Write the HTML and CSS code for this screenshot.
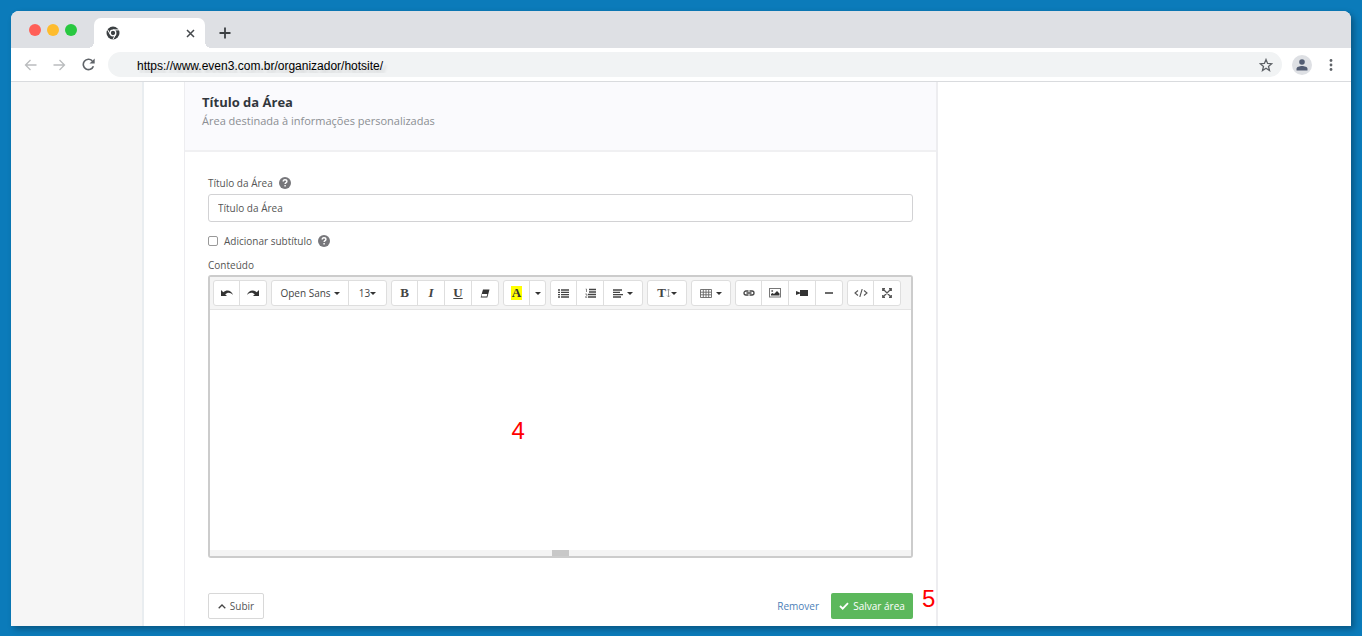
FILE: index.html
```html
<!DOCTYPE html>
<html lang="pt-BR">
<head>
<meta charset="UTF-8">
<meta name="viewport" content="width=device-width, initial-scale=1.0">
<title>Hotsite - Título da Área</title>
<link rel="stylesheet" href="styles.css">
</head>
<body>
<div class="window">
  <div class="tabs">
    <div class="lights">
      <span class="light red"></span>
      <span class="light yellow"></span>
      <span class="light green"></span>
    </div>
    <div class="tab">
      <svg width="14" height="14" viewBox="0 0 14 14"><circle cx="7" cy="7" r="6.500" fill="#3c4043"/><path d="M7 3.900h5.800M4.300 8.500L1.500 3.600M9.700 8.500L6.900 13.400" stroke="#fff" stroke-width="1"/><circle cx="7" cy="7" r="2.800" fill="#3c4043" stroke="#fff" stroke-width="1.300"/></svg>
      <button class="tab-close" aria-label="Fechar"><svg width="9" height="9" viewBox="0 0 9 9"><path d="M1 1l7 7M8 1l-7 7" stroke="#45494d" stroke-width="1.500"/></svg></button>
    </div>
    <button class="tab-new" aria-label="Nova guia"><svg width="12" height="12" viewBox="0 0 12 12"><path d="M6 .5v11M.5 6h11" stroke="#3c4043" stroke-width="1.800"/></svg></button>
  </div>

  <div class="nav">
    <button class="nav-btn" aria-label="Voltar"><svg width="13" height="12" viewBox="0 0 13 12"><path d="M12.500 6H1.500M6.500 1L1.500 6l5 5" fill="none" stroke="#babcbe" stroke-width="1.300"/></svg></button>
    <button class="nav-btn" aria-label="Avançar"><svg width="13" height="12" viewBox="0 0 13 12"><path d="M.5 6h11M6.500 1l5 5-5 5" fill="none" stroke="#babcbe" stroke-width="1.300"/></svg></button>
    <button class="nav-btn" aria-label="Recarregar"><svg width="13" height="13" viewBox="0 0 13 13"><path d="M11.400 8.200A5.200 5.200 0 1 1 10.300 2.900" fill="none" stroke="#5f6368" stroke-width="1.600"/><path d="M12.700.400v5.200H7.500z" fill="#5f6368"/></svg></button>
    <div class="address">
      <input class="url" type="text" value="https://www.even3.com.br/organizador/hotsite/" aria-label="Endereço">
      <button class="star" aria-label="Favoritar"><svg width="14" height="14" viewBox="0 0 14 14"><path d="M7 1.500l1.600 3.900 4.100.3-3.200 2.700 1 4.100L7 10.300l-3.500 2.200 1-4.100L1.300 5.700l4.100-.3z" fill="none" stroke="#5f6368" stroke-width="1.300"/></svg></button>
    </div>
    <button class="avatar" aria-label="Perfil"><svg width="12" height="12" viewBox="0 0 12 12"><circle cx="6" cy="3" r="2.800" fill="#535d73"/><path d="M.5 11.500V9.800C.5 8 3.500 7 6 7s5.500 1 5.500 2.800v1.700z" fill="#535d73"/></svg></button>
    <button class="menu" aria-label="Menu"><svg width="4" height="14" viewBox="0 0 4 14"><g fill="#5f6368"><circle cx="2" cy="2.500" r="1.400"/><circle cx="2" cy="7" r="1.400"/><circle cx="2" cy="11.500" r="1.400"/></g></svg></button>
  </div>

  <div class="page">
    <aside class="sidebar"></aside>
    <section class="panel">
      <header class="panel-header">
        <h1 class="panel-title">Título da Área</h1>
        <p class="panel-sub">Área destinada à informações personalizadas</p>
      </header>

      <form class="panel-body">
        <div class="label-row">
          <label for="titulo">Título da Área</label>
          <svg class="help" width="12" height="12" viewBox="0 0 12 12"><circle cx="6" cy="6" r="6" fill="#77777b"/><path d="M4.200 4.600C4.200 3.200 5 2.800 6 2.800s1.900.6 1.900 1.600C7.900 5.700 6.100 5.600 6.100 7.100M6.100 8.100v1.400" fill="none" stroke="#fff" stroke-width="1.400"/></svg>
        </div>
        <input class="text" id="titulo" type="text" value="Título da Área">

        <div class="check-row">
          <input class="check" id="subtitulo" type="checkbox">
          <label for="subtitulo">Adicionar subtítulo</label>
          <svg class="help" width="12" height="12" viewBox="0 0 12 12"><circle cx="6" cy="6" r="6" fill="#77777b"/><path d="M4.200 4.600C4.200 3.200 5 2.800 6 2.800s1.900.6 1.900 1.600C7.900 5.700 6.100 5.600 6.100 7.100M6.100 8.100v1.400" fill="none" stroke="#fff" stroke-width="1.400"/></svg>
        </div>

        <label class="content-label" for="conteudo">Conteúdo</label>
        <div class="editor">
          <div class="toolbar">
            <div class="group">
              <button type="button" class="btn" aria-label="Desfazer"><svg width="12" height="8" viewBox="0 0 12 8"><path d="M0 1v6h6L4.200 5.200C6.500 3 9.500 3 12 6 10.500 1.500 6 .2 2.300 3.200z" fill="#333"/></svg></button>
              <button type="button" class="btn" aria-label="Refazer"><svg width="12" height="8" viewBox="0 0 12 8"><path d="M12 1v6H6l1.800-1.800C5.500 3 2.500 3 0 6 1.500 1.500 6 .2 9.700 3.200z" fill="#333"/></svg></button>
            </div>
            <div class="group">
              <button type="button" class="btn font-name">Open Sans <span class="caret"></span></button>
              <button type="button" class="btn font-size">13<span class="caret"></span></button>
            </div>
            <div class="group">
              <button type="button" class="btn serif bold">B</button>
              <button type="button" class="btn serif italic">I</button>
              <button type="button" class="btn serif underline">U</button>
              <button type="button" class="btn" aria-label="Limpar"><svg width="10" height="9" viewBox="0 0 10 9"><path d="M3 .5h6.500L7.300 8.500H.7z" fill="#333"/><path d="M2 5h5.300l-.6 2.400H1.500z" fill="#fff"/></svg></button>
            </div>
            <div class="group">
              <button type="button" class="btn serif"><span class="mark">A</span></button>
              <button type="button" class="btn narrow" aria-label="Mais cores"><span class="caret"></span></button>
            </div>
            <div class="group">
              <button type="button" class="btn" aria-label="Lista"><svg width="11" height="9" viewBox="0 0 11 9"><path d="M0 1h2M0 3.300h2M0 5.700h2M0 8h2M3 1h8M3 3.300h8M3 5.700h8M3 8h8" stroke="#444" stroke-width="1.300"/></svg></button>
              <button type="button" class="btn" aria-label="Lista numerada"><svg width="11" height="10" viewBox="0 0 11 10"><path d="M4 1.500h7M4 4h7M3 6.500h8M3 9h8" stroke="#444" stroke-width="1.300"/><path d="M.7 1h.8v3M.3 6h1.500v1.500L.3 9.300h1.900" fill="none" stroke="#666" stroke-width=".8"/></svg></button>
              <button type="button" class="btn wide" aria-label="Alinhamento"><svg width="10" height="9" viewBox="0 0 10 9"><path d="M0 1h9M0 3.300h7M0 5.700h10M0 8h8" stroke="#444" stroke-width="1.300"/></svg><span class="caret spaced"></span></button>
            </div>
            <div class="group">
              <button type="button" class="btn serif single line-height" aria-label="Altura da linha">T<svg width="5" height="10" viewBox="0 0 5 10"><path d="M2.500 1v8M1 2.500L2.500 1 4 2.500M1 7.500L2.500 9 4 7.500" fill="none" stroke="#888" stroke-width=".8"/></svg><span class="caret"></span></button>
            </div>
            <div class="group">
              <button type="button" class="btn single" aria-label="Tabela"><svg width="12" height="9" viewBox="0 0 12 9"><path d="M.5.500h11v8H.5zM.5 3.200h11M.5 5.800h11M3.300.500v8M6 .500v8M8.700.500v8" fill="none" stroke="#666" stroke-width=".9"/></svg><span class="caret spaced"></span></button>
            </div>
            <div class="group">
              <button type="button" class="btn" aria-label="Link"><svg width="12" height="6" viewBox="0 0 12 6"><path d="M5.500 1H3a2 2 0 0 0 0 4h2.500M6.500 1H9a2 2 0 0 1 0 4H6.500M3.500 3h5" fill="none" stroke="#444" stroke-width="1.300"/></svg></button>
              <button type="button" class="btn" aria-label="Imagem"><svg width="12" height="10" viewBox="0 0 12 10"><rect x=".5" y=".5" width="11" height="8.500" fill="#fff" stroke="#777"/><circle cx="3.200" cy="3" r="1" fill="#666"/><path d="M2 7.500V6l1.500-1L5 6l3-3 2.500 2.500v2z" fill="#333"/></svg></button>
              <button type="button" class="btn" aria-label="Vídeo"><svg width="12" height="8" viewBox="0 0 12 8"><path d="M4 1h8v6H4zM0 2l4 1.500v1L0 6z" fill="#333"/></svg></button>
              <button type="button" class="btn" aria-label="Linha"><svg width="8" height="2" viewBox="0 0 8 2"><path d="M0 1h8" stroke="#444" stroke-width="1.600"/></svg></button>
            </div>
            <div class="group">
              <button type="button" class="btn" aria-label="Código"><svg width="14" height="8" viewBox="0 0 14 8"><path d="M4 1.500L1 4l3 2.500M10 1.500L13 4l-3 2.500M8.200 0L5.800 8" fill="none" stroke="#555" stroke-width="1.100"/></svg></button>
              <button type="button" class="btn" aria-label="Tela cheia"><svg width="10" height="10" viewBox="0 0 10 10"><path d="M1 1l8 8M9 1L1 9M.7 3V.7H3M7 .7h2.300V3M.7 7v2.300H3M7 9.300h2.300V7" fill="none" stroke="#555" stroke-width="1.200"/></svg></button>
            </div>
          </div>
          <textarea class="content" id="conteudo"></textarea>
          <div class="statusbar"><span class="grip"></span></div>
          <span class="step step-content">4</span>
        </div>

        <div class="actions">
          <button type="button" class="up"><svg width="8" height="5" viewBox="0 0 8 5"><path d="M.7 4.300L4 1l3.300 3.300" fill="none" stroke="#444" stroke-width="1.300"/></svg>Subir</button>
          <a class="remove" href="#">Remover</a>
          <button type="submit" class="save"><svg width="10" height="8" viewBox="0 0 10 8"><path d="M1 4l2.700 2.700L9 1.200" fill="none" stroke="#fff" stroke-width="1.800"/></svg>Salvar área</button>
          <span class="step step-save">5</span>
        </div>
      </form>
    </section>
  </div>
</div>
</body>
</html>
```

FILE: styles.css
```css
* {
  box-sizing: border-box;
}

body {
  margin: 0;
  padding: 11px 11px 10px;
  min-height: 100vh;
  display: flex;
  background: #0b7bba;
  font-family: "Open Sans", sans-serif;
  font-size: 10px;
  color: #555;
}

button, input, textarea {
  font: inherit;
  color: inherit;
}

button {
  padding: 0;
  border: 0;
  background: none;
  display: flex;
  align-items: center;
  justify-content: center;
}

svg {
  display: block;
  flex: none;
}

.window {
  flex: 1;
  display: flex;
  flex-direction: column;
  background: #fff;
  border-radius: 8px 8px 0 0;
  box-shadow: 3px 3px 6px rgba(0, 0, 0, 0.3);
}

/* browser tabs */
.tabs {
  display: flex;
  align-items: flex-end;
  height: 37px;
  padding-left: 18px;
  background: #dee0e4;
  border-radius: 8px 8px 0 0;
}

.lights {
  display: flex;
  gap: 6px;
  align-self: center;
  margin-right: 17px;
}

.light {
  width: 12px;
  height: 12px;
  border-radius: 50%;
}

.red { background: #ff5f57; }
.yellow { background: #febc2e; }
.green { background: #28c840; }

.tab {
  position: relative;
  display: flex;
  align-items: center;
  justify-content: space-between;
  width: 111px;
  height: 30px;
  padding: 0 10px 0 12px;
  background: #fff;
  border-radius: 7px 7px 0 0;
}

/* curved feet of the active tab */
.tab::before,
.tab::after {
  content: "";
  position: absolute;
  bottom: 0;
  width: 6px;
  height: 6px;
}

.tab::before {
  right: 100%;
  background: radial-gradient(circle at 0 0, #dee0e4 6px, #fff 6px);
}

.tab::after {
  left: 100%;
  background: radial-gradient(circle at 100% 0, #dee0e4 6px, #fff 6px);
}

.tab-new {
  height: 30px;
  margin-left: 14px;
}

/* address bar */
.nav {
  display: flex;
  align-items: center;
  height: 34px;
  padding: 0 18px 0 13px;
  border-bottom: 1px solid #d9dbde;
}

.nav-btn {
  margin-right: 16px;
}

.address {
  flex: 1;
  display: flex;
  align-items: center;
  height: 25px;
  margin-right: 10px;
  margin-left: -3px;
  padding: 0 9px 0 29px;
  background: #f1f3f4;
  border-radius: 13px;
}

.url {
  flex: 1;
  border: 0;
  padding: 2px 0 0;
  background: none;
  outline: 0;
  font-family: "Liberation Sans", Arial, sans-serif;
  font-size: 12px;
  color: #000;
  text-shadow: 3px 4px 3px rgba(0, 0, 0, 0.15);
}

.avatar {
  width: 20px;
  height: 20px;
  margin-right: 17px;
  background: #dee0e4;
  border-radius: 50%;
}

/* page */
.page {
  flex: 1;
  display: flex;
}

.sidebar {
  width: 133px;
  margin-right: 40px;
  background: #f6f6f6;
  border-right: 2px solid #e9edf0;
}

.panel {
  flex: 0 1 754px;
  border: solid #ededf0;
  border-width: 0 2px 0 1px;
}

.panel-header {
  height: 70px;
  padding: 11px 17px;
  background: #fafafd;
  border-bottom: 2px solid #f0f0f2;
}

.panel-title {
  margin: 0;
  font-size: 13px;
  line-height: 18px;
  color: #32373d;
}

.panel-sub {
  margin: 0;
  font-size: 11px;
  line-height: 19px;
  color: #8b8e93;
}

.panel-body {
  padding: 24px 23px 7px;
}

.label-row,
.check-row {
  display: flex;
  align-items: center;
  gap: 6px;
  line-height: 14px;
}

.text {
  display: block;
  width: 100%;
  height: 28px;
  margin: 4px 0 12px;
  padding: 0 9px;
  border: 1px solid #d2d2d4;
  border-radius: 3px;
}

.check {
  appearance: none;
  width: 10px;
  height: 10px;
  margin: 0;
  border: 1px solid #999;
  border-radius: 2px;
  background: #fff;
}

.content-label {
  display: block;
  margin: 10px 0 3px;
  line-height: 14px;
}

/* editor */
.editor {
  position: relative;
  border: 2px solid #ccc;
  border-radius: 3px;
}

.toolbar {
  display: flex;
  flex-wrap: wrap;
  gap: 4px;
  padding: 3px;
  background: #f4f4f4;
  border-bottom: 1px solid #e4e4e4;
}

.group {
  display: flex;
  border: 1px solid #dedede;
  border-radius: 3px;
  background: #fff;
}

.btn {
  width: 25px;
  height: 24px;
  color: #444;
}

.btn + .btn {
  width: 27px;
  border-left: 1px solid #dedede;
}

.btn.font-name { width: 76px; }
.btn.single { width: 38px; }
.btn + .btn.font-size { width: 38px; }
.btn + .btn.wide { width: 39px; }
.btn + .btn.narrow { width: 16px; }

.font-name .caret {
  margin-left: 3px;
}

.caret {
  border: solid transparent;
  border-width: 3px 3px 0;
  border-top-color: #333;
}

.caret.spaced {
  margin-left: 4px;
}

.serif {
  font-family: "Liberation Serif", serif;
  font-size: 13px;
  font-weight: bold;
}

.italic { font-style: italic; }
.underline { text-decoration: underline; }

.mark {
  padding: 0 1px;
  line-height: 14px;
  background: #ff0;
  color: #333;
}

.content {
  display: block;
  width: 100%;
  height: 240px;
  padding: 8px;
  border: 0;
  outline: 0;
  resize: none;
}

.statusbar {
  display: flex;
  justify-content: center;
  height: 6px;
  background: #f4f4f4;
}

.grip {
  width: 17px;
  height: 6px;
  background: #c8c8c8;
}

.actions {
  position: relative;
  display: flex;
  align-items: center;
  margin-top: 35px;
}

.up,
.save {
  height: 26px;
  border-radius: 2px;
  gap: 4px;
}

.up {
  width: 56px;
  margin-right: auto;
  border: 1px solid #d8d8d8;
}

.remove {
  margin-right: 12px;
  color: #4c80b8;
  text-decoration: none;
}

.save {
  width: 82px;
  background: #5cb85c;
  color: #fff;
}

/* numbered step marks */
.step {
  position: absolute;
  font-family: "Liberation Sans", Arial, sans-serif;
  font-size: 24px;
  line-height: 28px;
  color: #f00;
}

.step-content {
  top: 50%;
  left: 43%;
}

.step-save {
  left: 100%;
  bottom: 6px;
  margin-left: 9px;
}
```
